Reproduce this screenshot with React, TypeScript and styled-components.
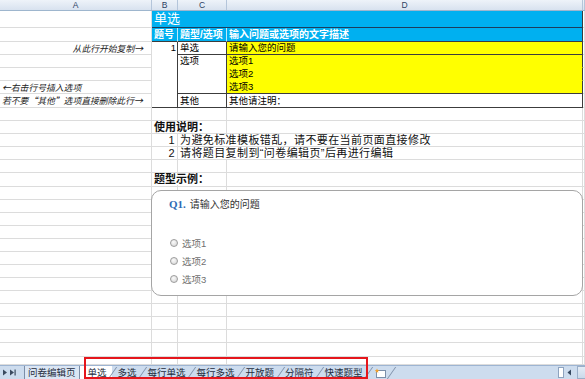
import React from "react";
import styled, { createGlobalStyle } from "styled-components";

const COLS = [152, 26, 49, 356, 2];
const ROWS = [17, 14, 13, 13, 13, 13, 14, 13, 13, 13, 13, 13, 14, 13, 13, 13, 13, 13, 13, 13, 13, 13, 13, 13, 13, 14, 8];
const GRID = "#dcdcdc";
const DARK = "#3c3c3c";
const BLUE = "#00b0f0";
const YELLOW = "#ffff00";
const CJK = `"Noto Sans CJK SC", "Liberation Sans", sans-serif`;
const colTemplate = COLS.map((w) => `${w}px`).join(" ");

const GlobalStyle = createGlobalStyle`
  html, body { margin: 0; padding: 0; background: #fff; }
  body {
    font-family: "Liberation Sans", "Noto Sans CJK SC", sans-serif;
    overflow: hidden;
  }
`;

const Screen = styled.div`
  position: relative;
  width: 585px;
  height: 379px;
  display: flex;
  flex-direction: column;
  overflow: hidden;
  background: #fff;
`;

const ColumnHeader = styled.div`
  flex: none;
  display: grid;
  grid-template-columns: ${colTemplate};
  height: 11px;
  box-sizing: border-box;
  border-bottom: 1px solid #9eb6ce;
  background: linear-gradient(#eef3f9, #d8e2ef);
`;

const HeaderCell = styled.div`
  box-sizing: border-box;
  border-right: 1px solid #b4c5da;
  font-size: 8.5px;
  line-height: 10px;
  text-align: center;
  color: #2c4263;
`;

const Sheet = styled.div`
  position: relative;
  flex: none;
  display: grid;
  grid-template-columns: ${colTemplate};
  grid-template-rows: ${ROWS.map((h) => `${h}px`).join(" ")};
`;

type Place = { $r: number; $c: number; $rs?: number; $cs?: number };

const GridCell = styled.div<Place>`
  grid-row: ${(p) => p.$r} / span ${(p) => p.$rs ?? 1};
  grid-column: ${(p) => p.$c} / span ${(p) => p.$cs ?? 1};
  box-sizing: border-box;
  min-width: 0;
  border-right: 1px solid ${GRID};
  border-bottom: 1px solid ${GRID};
`;

type TableProps = {
  $bg?: string;
  $split?: string;
  $bottom?: string;
  $right?: boolean;
  $top?: boolean;
  $bold?: boolean;
  $color?: string;
  $size?: number;
};

const TableCell = styled(GridCell)<TableProps>`
  display: flex;
  align-items: ${(p) => (p.$top ? "flex-start" : "center")};
  justify-content: ${(p) => (p.$right ? "flex-end" : "flex-start")};
  padding: 0 ${(p) => (p.$right ? 1 : 2)}px 0 2px;
  background: ${(p) => p.$bg ?? "#fff"};
  border-right-color: ${(p) => p.$split ?? DARK};
  border-bottom-color: ${(p) => p.$bottom ?? DARK};
  color: ${(p) => p.$color ?? "#000"};
  font-size: ${(p) => p.$size ?? 9.5}px;
  font-weight: ${(p) => (p.$bold ? 700 : 400)};
  line-height: 12px;
  white-space: nowrap;
  overflow: hidden;
`;

const NoteCell = styled(GridCell)<{ $right?: boolean }>`
  display: flex;
  align-items: center;
  justify-content: ${(p) => (p.$right ? "flex-end" : "flex-start")};
  padding: 0 ${(p) => (p.$right ? 8 : 0)}px 0 2px;
  font-family: ${CJK};
  font-size: 8.8px;
  font-style: italic;
  line-height: 11px;
  color: #222;
  white-space: nowrap;
`;

const TextCell = styled(GridCell)<{ $right?: boolean; $bold?: boolean }>`
  display: flex;
  align-items: center;
  justify-content: ${(p) => (p.$right ? "flex-end" : "flex-start")};
  padding: 0 ${(p) => (p.$right ? 2 : 0)}px 0 ${(p) => (p.$right ? 0 : 2)}px;
  font-size: 11px;
  letter-spacing: ${(p) => (p.$bold ? 0 : 0.4)}px;
  font-weight: ${(p) => (p.$bold ? 700 : 400)};
  line-height: 11px;
  color: #111;
  white-space: nowrap;
  position: relative;
  z-index: 1;
`;

const Spill = styled.span`
  background: #fff;
  line-height: 11px;
`;

const Card = styled.div`
  position: absolute;
  top: 179px;
  left: 151px;
  width: 432px;
  height: 106px;
  box-sizing: border-box;
  border: 1px solid #a5a5a5;
  border-radius: 10px;
  background: #fff;
  padding: 6px 0 0 17px;
  z-index: 2;
`;

const Question = styled.div`
  display: flex;
  align-items: baseline;
  height: 14px;
  line-height: 14px;
`;

const QNo = styled.span`
  font-family: "Liberation Serif", serif;
  font-weight: 700;
  font-size: 11px;
  color: #2e6bb5;
  margin-right: 4px;
`;

const QText = styled.span`
  font-size: 10px;
  color: #333;
`;

const Options = styled.div`
  display: flex;
  flex-direction: column;
  margin-top: 23px;
`;

const Option = styled.label`
  display: flex;
  align-items: center;
  height: 18px;
  font-size: 9.5px;
  color: #707070;
`;

const Radio = styled.span`
  width: 8px;
  height: 8px;
  margin: 0 4px 0 1px;
  box-sizing: border-box;
  border: 1px solid #9c9c9c;
  border-radius: 50%;
  background: radial-gradient(circle at 40% 35%, #fafafa, #d2d2d2);
`;

const TabBar = styled.div`
  flex: none;
  display: flex;
  align-items: stretch;
  height: 14px;
  box-sizing: border-box;
  border-top: 1px solid #9db4d2;
  background: #cddcee;
  font-size: 9.5px;
  line-height: 13px;
  color: #1f2d3d;
`;

const Nav = styled.div`
  width: 22px;
  display: flex;
  align-items: center;
`;

const FirstTab = styled.div`
  margin-left: 2px;
  padding: 0 3px;
  border-left: 1px solid #7c8ea8;
  border-right: 1px solid #7c8ea8;
  background: #dbe6f4;
`;

const Tab = styled.div<{ $active?: boolean; $first?: boolean }>`
  position: relative;
  padding: 0 5.5px 0 ${(p) => (p.$first ? 8 : 5.5)}px;
  background: ${(p) => (p.$active ? "#fff" : "transparent")};
  display: flex;
  align-items: center;

  &::after {
    content: "";
    position: absolute;
    right: -1px;
    top: 1px;
    bottom: 0;
    width: 1px;
    background: #7f91ab;
    transform: skewX(-35deg);
  }
`;

const Scroller = styled.div`
  margin-left: auto;
  display: flex;
  align-items: center;
  gap: 3px;
`;

const Thumb = styled.span`
  width: 4px;
  height: 9px;
  border: 1px solid #8ea3bf;
  background: #fff;
`;

const Track = styled.span`
  width: 7px;
  height: 11px;
  margin-left: 2px;
  border: 1px solid #9aaec8;
  border-right: none;
  background: linear-gradient(#e4ecf6, #cbd9ea);
`;

const Highlight = styled.div`
  position: absolute;
  left: 84px;
  top: 357px;
  width: 284px;
  height: 22px;
  box-sizing: border-box;
  border: 2px solid #e5161c;
  pointer-events: none;
  z-index: 3;
`;

const TABS = ["多选", "每行单选", "每行多选", "开放题", "分隔符", "快速题型"];

function NavArrows() {
  return (
    <svg width="20" height="9" viewBox="0 0 20 9">
      <path d="M3 1.5 L7 4.5 L3 7.5 Z" fill="#3b4a5f" />
      <path d="M10 1.5 L14 4.5 L10 7.5 Z" fill="#3b4a5f" />
      <rect x="14.5" y="1.5" width="1.2" height="6" fill="#3b4a5f" />
    </svg>
  );
}

function NewSheetIcon() {
  return (
    <svg width="12" height="10" viewBox="0 0 12 10">
      <rect x="2.5" y="2.5" width="9" height="7" fill="#fff" stroke="#7b8faa" />
      <path d="M3 0.5 L3.7 2 L5.2 2.2 L4 3.2 L4.4 4.7 L3 3.9 L1.6 4.7 L2 3.2 L0.8 2.2 L2.3 2 Z" fill="#f0a030" />
    </svg>
  );
}

export default function App() {
  const blanks: React.ReactNode[] = [];
  ROWS.forEach((_, r) =>
    COLS.forEach((__, c) => blanks.push(<GridCell key={`${r}-${c}`} $r={r + 1} $c={c + 1} />))
  );

  return (
    <Screen>
      <GlobalStyle />
      <ColumnHeader>
        <HeaderCell>A</HeaderCell>
        <HeaderCell>B</HeaderCell>
        <HeaderCell>C</HeaderCell>
        <HeaderCell>D</HeaderCell>
        <HeaderCell />
      </ColumnHeader>

      <Sheet>
        {blanks}

        {/* template table */}
        <TableCell $r={1} $c={2} $cs={3} $bg={BLUE} $color="#fff" $size={13} $bottom="#1d3d5c">
          单选
        </TableCell>
        <TableCell $r={2} $c={2} $bg={BLUE} $color="#fff" $bold $size={10} $split="#bfeafb">
          题号
        </TableCell>
        <TableCell $r={2} $c={3} $bg={BLUE} $color="#fff" $bold $size={10} $split="#bfeafb">
          题型/选项
        </TableCell>
        <TableCell $r={2} $c={4} $bg={BLUE} $color="#fff" $bold $size={10}>
          输入问题或选项的文字描述
        </TableCell>

        <TableCell $r={3} $c={2} $rs={5} $right $top>
          1
        </TableCell>
        <TableCell $r={3} $c={3}>单选</TableCell>
        <TableCell $r={3} $c={4} $bg={YELLOW}>
          请输入您的问题
        </TableCell>
        <TableCell $r={4} $c={3} $rs={3} $top>
          选项
        </TableCell>
        <TableCell $r={4} $c={4} $bg={YELLOW} $bottom={YELLOW}>
          选项1
        </TableCell>
        <TableCell $r={5} $c={4} $bg={YELLOW} $bottom={YELLOW}>
          选项2
        </TableCell>
        <TableCell $r={6} $c={4} $bg={YELLOW}>
          选项3
        </TableCell>
        <TableCell $r={7} $c={3}>其他</TableCell>
        <TableCell $r={7} $c={4}>其他请注明：</TableCell>

        {/* hints in column A */}
        <NoteCell $r={3} $c={1} $right>
          从此行开始复制→
        </NoteCell>
        <NoteCell $r={6} $c={1}>←右击行号插入选项</NoteCell>
        <NoteCell $r={7} $c={1}>若不要“其他”选项直接删除此行→</NoteCell>

        {/* instructions */}
        <TextCell $r={9} $c={2} $bold>
          <Spill>使用说明：</Spill>
        </TextCell>
        <TextCell $r={10} $c={2} $right>
          1
        </TextCell>
        <TextCell $r={10} $c={3}>
          <Spill>为避免标准模板错乱，请不要在当前页面直接修改</Spill>
        </TextCell>
        <TextCell $r={11} $c={2} $right>
          2
        </TextCell>
        <TextCell $r={11} $c={3}>
          <Spill>请将题目复制到“问卷编辑页”后再进行编辑</Spill>
        </TextCell>
        <TextCell $r={13} $c={2} $bold>
          <Spill>题型示例：</Spill>
        </TextCell>

        <Card>
          <Question>
            <QNo>Q1.</QNo>
            <QText>请输入您的问题</QText>
          </Question>
          <Options>
            {["选项1", "选项2", "选项3"].map((o) => (
              <Option key={o}>
                <Radio />
                {o}
              </Option>
            ))}
          </Options>
        </Card>
      </Sheet>

      <TabBar>
        <Nav>
          <NavArrows />
        </Nav>
        <FirstTab>问卷编辑页</FirstTab>
        <Tab $active $first>
          单选
        </Tab>
        {TABS.map((t) => (
          <Tab key={t}>{t}</Tab>
        ))}
        <Tab>
          <NewSheetIcon />
        </Tab>
        <Scroller>
          <Thumb />
          <svg width="5" height="7" viewBox="0 0 5 7">
            <path d="M4 0.5 L0.5 3.5 L4 6.5 Z" fill="#34465e" />
          </svg>
          <Track />
        </Scroller>
      </TabBar>
      <Highlight />
    </Screen>
  );
}
